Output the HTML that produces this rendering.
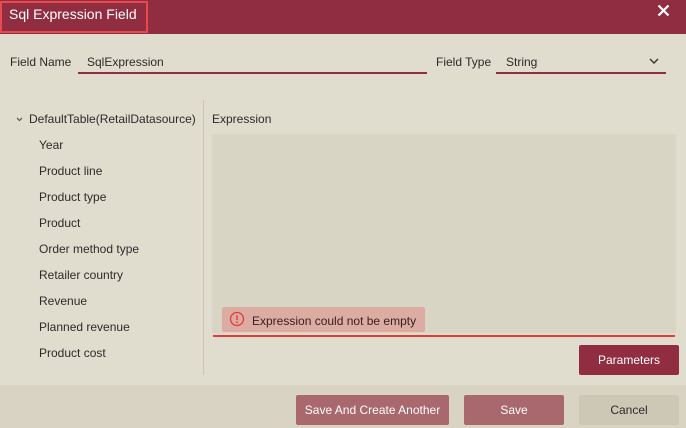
<!DOCTYPE html>
<html><head><meta charset="utf-8"><style>
*{margin:0;padding:0;box-sizing:border-box}
body{width:686px;height:428px;background:#e0dcce;font-family:"Liberation Sans",sans-serif;font-size:12px;color:#2b2b2b;position:relative;overflow:hidden}
.a{position:absolute;white-space:nowrap}
.hdr{left:0;top:0;width:686px;height:34px;background:#912d41}
.btn{position:absolute;height:30px;line-height:31px;text-align:center;font-size:12px;border-radius:2px}
</style></head><body>
<div class="a hdr"></div>
<div class="a" style="left:0px;top:1px;width:148px;height:32px;border:2px solid #e94a4f"></div>
<div class="a" style="left:9px;top:6px;font-size:14px;color:#fff">Sql Expression Field</div>
<svg class="a" style="left:657px;top:4px" width="13" height="13" viewBox="0 0 13 13"><path d="M1.5 1.5L11.5 11.5M11.5 1.5L1.5 11.5" stroke="#fff" stroke-width="2.2"/></svg>

<div class="a" style="left:10px;top:55px">Field Name</div>
<div class="a" style="left:87px;top:55px">SqlExpression</div>
<div class="a" style="left:78px;top:72px;width:349px;height:2px;background:#912d41"></div>
<div class="a" style="left:436px;top:55px">Field Type</div>
<div class="a" style="left:506px;top:55px">String</div>
<svg class="a" style="left:649px;top:58px" width="10" height="6" viewBox="0 0 10 6"><path d="M1 1L5 5L9 1" stroke="#333" stroke-width="1.4" fill="none"/></svg>
<div class="a" style="left:496px;top:72px;width:170px;height:2px;background:#912d41"></div>

<svg class="a" style="left:16px;top:117px" width="7" height="5" viewBox="0 0 7 5"><path d="M1 1L3.5 3.5L6 1" stroke="#444" stroke-width="1" fill="none"/></svg>
<div class="a" style="left:29px;top:112px">DefaultTable(RetailDatasource)</div>
<div class="a" style="left:39px;top:138px">Year</div>
<div class="a" style="left:39px;top:164px">Product line</div>
<div class="a" style="left:39px;top:190px">Product type</div>
<div class="a" style="left:39px;top:216px">Product</div>
<div class="a" style="left:39px;top:242px">Order method type</div>
<div class="a" style="left:39px;top:268px">Retailer country</div>
<div class="a" style="left:39px;top:294px">Revenue</div>
<div class="a" style="left:39px;top:320px">Planned revenue</div>
<div class="a" style="left:39px;top:346px">Product cost</div>
<div class="a" style="left:203px;top:100px;width:1px;height:275px;background:#c9c4b4"></div>

<div class="a" style="left:212px;top:112px">Expression</div>
<div class="a" style="left:212px;top:134px;width:464px;height:199px;background:#d9d5c5"></div>
<div class="a" style="left:213px;top:335px;width:462px;height:2px;background:#e53b3b"></div>
<div class="a" style="left:222px;top:307px;width:203px;height:25px;background:#dcaca3;border-radius:2px"></div>
<svg class="a" style="left:229px;top:311px" width="16" height="16" viewBox="0 0 16 16"><circle cx="8" cy="8" r="6.5" stroke="#e23a3a" stroke-width="1.3" fill="none"/><path d="M8 4.3V9" stroke="#e23a3a" stroke-width="1.4"/><circle cx="8" cy="11.3" r=".9" fill="#e23a3a"/></svg>
<div class="a" style="left:252px;top:314px;color:#3a2020">Expression could not be empty</div>

<div class="btn" style="left:579px;top:345px;width:100px;background:#912d41;color:#fff">Parameters</div>
<div class="a" style="left:0;top:385px;width:686px;height:43px;background:#d8d3c3"></div>
<div class="btn" style="left:296px;top:395px;width:153px;background:#a8686e;color:#fff">Save And Create Another</div>
<div class="btn" style="left:464px;top:395px;width:100px;background:#a8686e;color:#fff">Save</div>
<div class="btn" style="left:579px;top:395px;width:100px;background:#cdc8b6;color:#2b2b2b">Cancel</div>
</body></html>
